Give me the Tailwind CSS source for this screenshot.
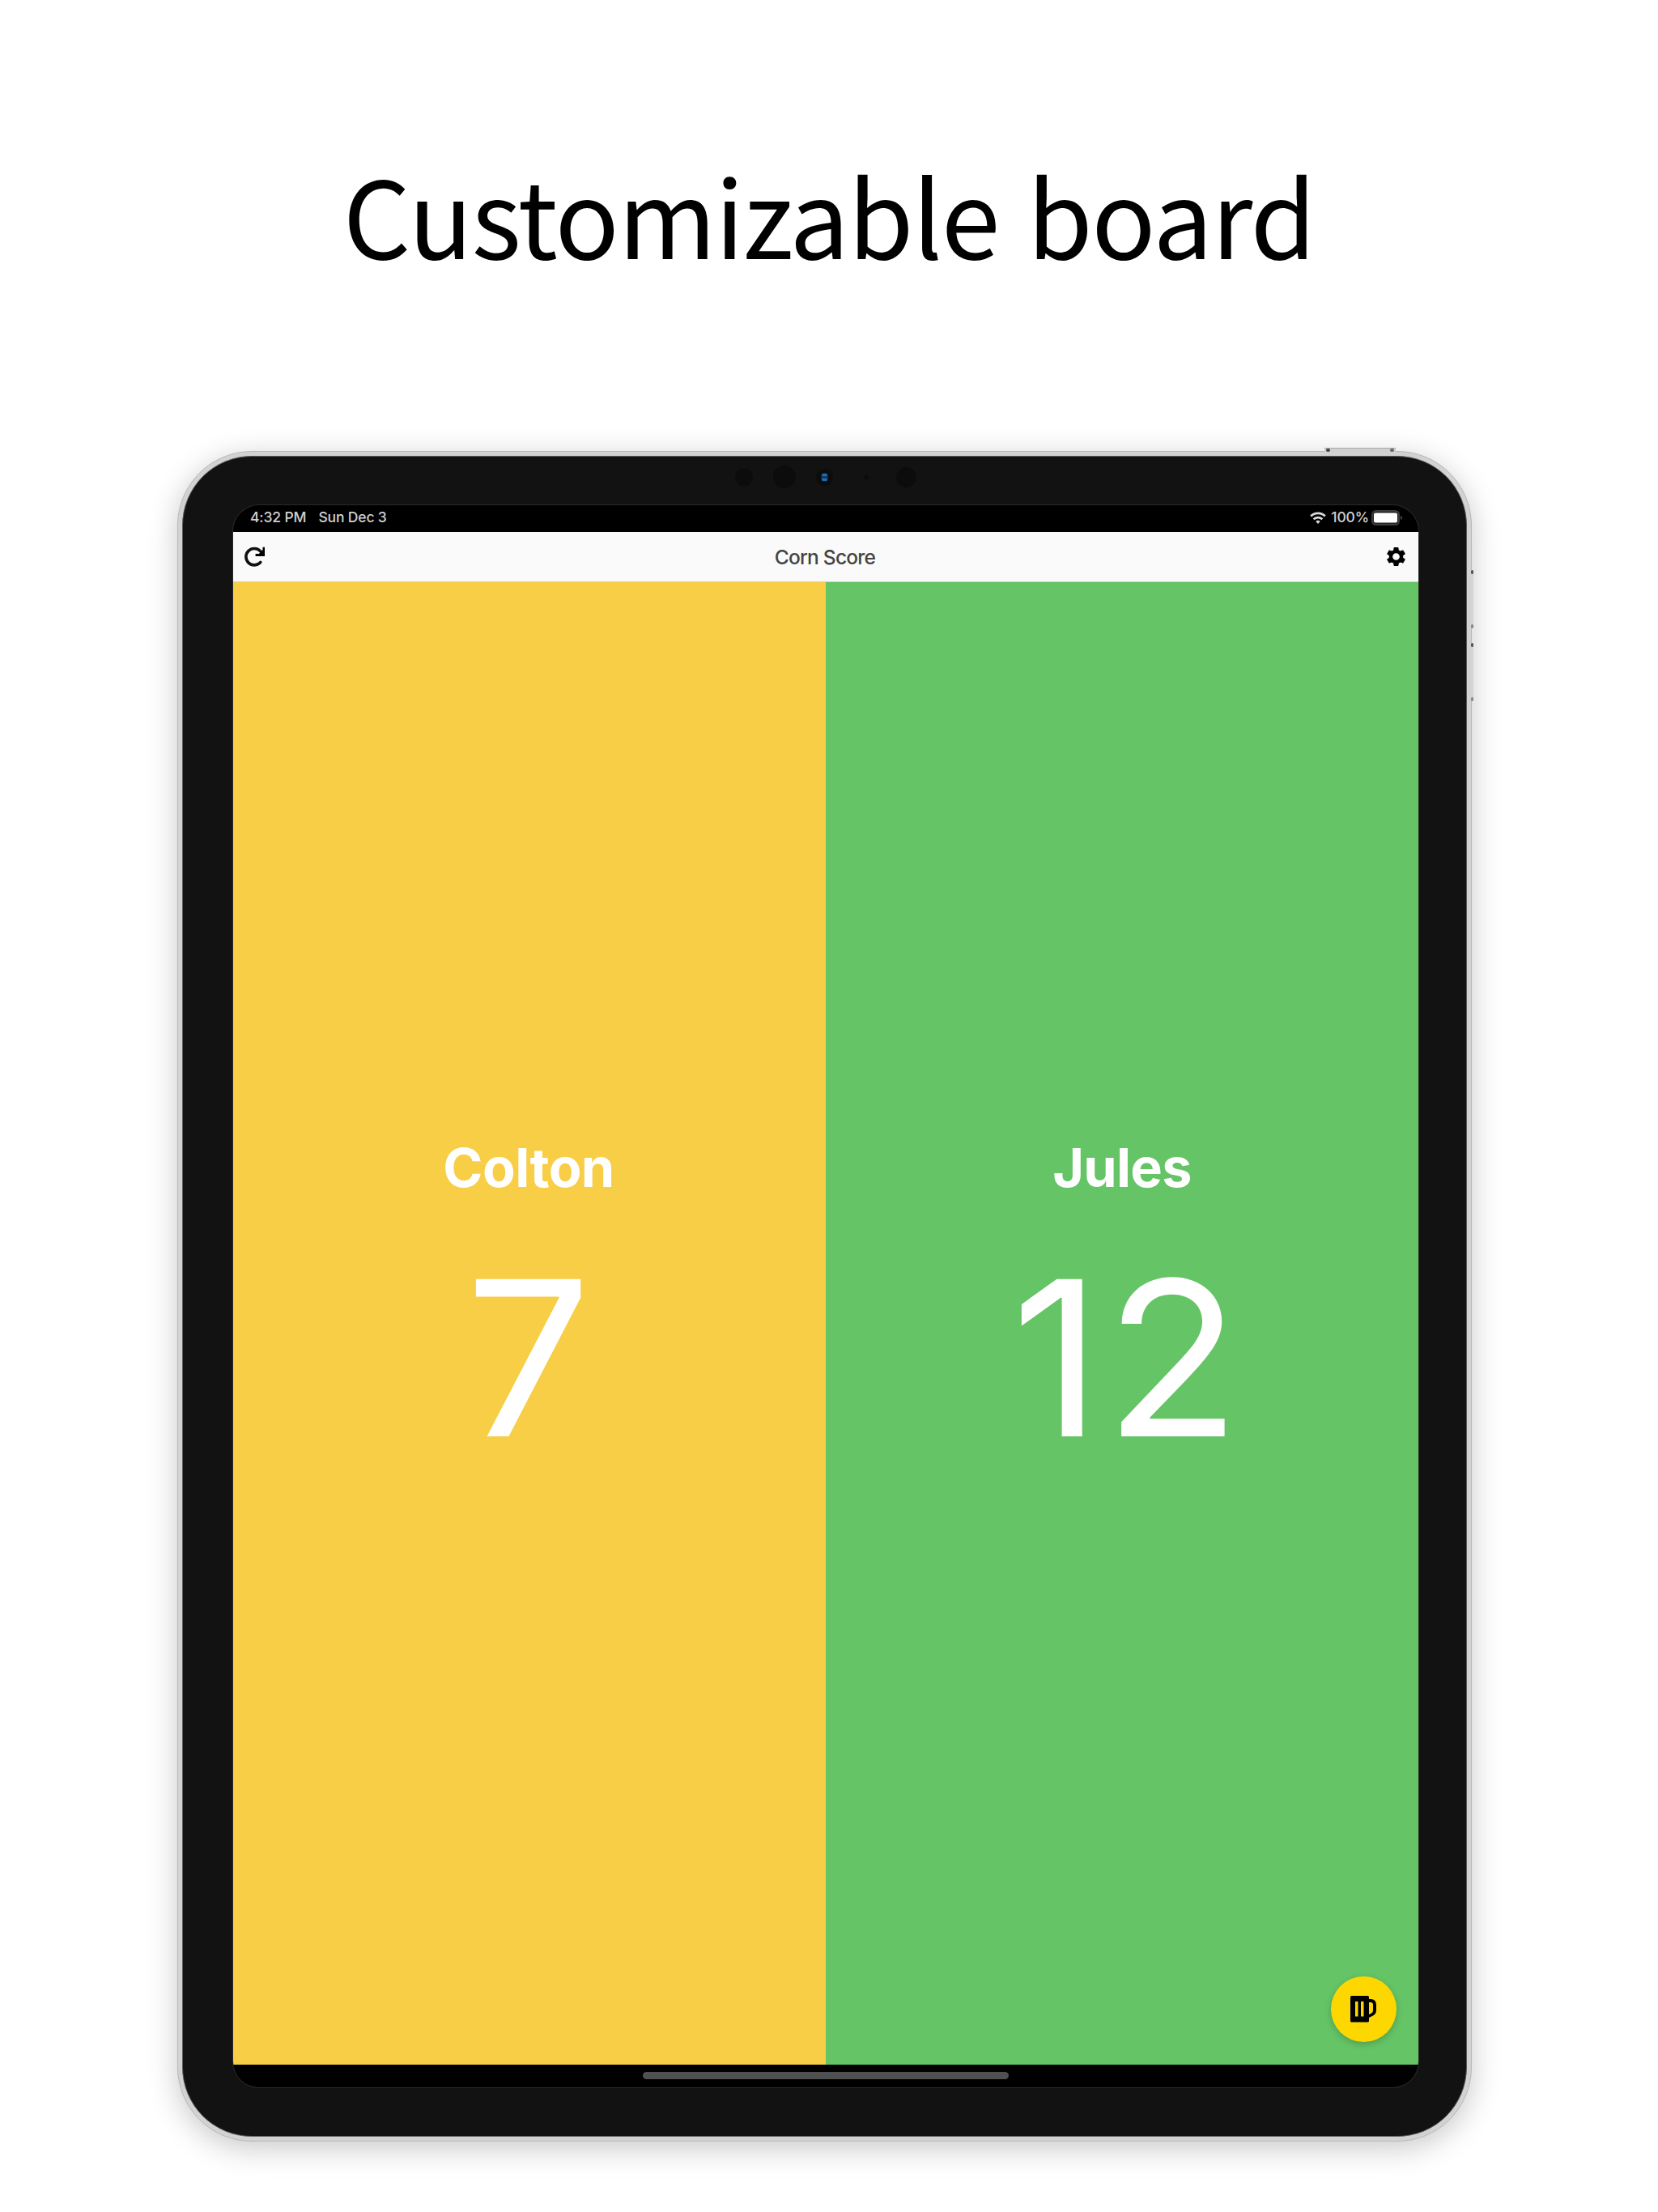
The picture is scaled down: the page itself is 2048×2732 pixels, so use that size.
<!DOCTYPE html>
<html lang="en">
<head>
<meta charset="utf-8">
<title>Corn Score</title>
<script src="https://cdn.jsdelivr.net/npm/@tailwindcss/browser@4"></script>
</head>
<body class="bg-white">
<main class="relative flex h-[2732px] w-[2048px] flex-col overflow-hidden bg-white font-['Inter',sans-serif]">
  <header class="flex h-[557px] shrink-0 justify-center pt-[163px]">
    <h1 class="h-[200px] whitespace-nowrap font-['Noto_Sans_CJK_SC',sans-serif] text-[131px] leading-[200px] font-normal tracking-[-1.450px] text-black [word-spacing:7px]">Customizable board</h1>
  </header>

  <!-- tablet body -->
  <section class="relative ml-[219px] flex h-[2088px] w-[1599px] flex-col rounded-[92px] border border-[#b9b9b9] bg-[#d2d2d2] p-[5px] shadow-[0_8px_36px_rgba(0,0,0,0.22)]">
    <!-- power and volume buttons -->
    <div class="absolute -top-[5px] left-[1416px] flex h-[5px] w-[88px] justify-between border-t border-[#aaa] bg-[#d0d0d0] px-[2px]"><i class="h-[4px] w-[5px] rounded-full bg-[#444]"></i><i class="h-[4px] w-[5px] rounded-full bg-[#666]"></i></div>
    <div class="absolute -right-[3px] top-[146px] flex h-[72px] w-[3px] flex-col justify-between bg-[#d4d4d4]"><i class="h-[5px] w-[3px] rounded-full bg-[#555]"></i><i class="h-[5px] w-[3px] rounded-full bg-[#888]"></i></div>
    <div class="absolute -right-[3px] top-[236px] flex h-[72px] w-[3px] flex-col justify-between bg-[#d4d4d4]"><i class="h-[5px] w-[3px] rounded-full bg-[#555]"></i><i class="h-[5px] w-[3px] rounded-full bg-[#888]"></i></div>

    <div class="relative flex grow flex-col rounded-[86px] border border-[#5a5a5a] bg-[#121212] pt-[60px] pr-[59px] pb-[60px] pl-[62px]">
      <!-- front camera and sensors -->
      <svg class="absolute left-[673px] top-[6px]" width="240" height="40" viewBox="899 570 240 40">
        <g fill="#0c0c0c"><circle cx="919" cy="589.5" r="11"/><circle cx="969" cy="589" r="14"/><circle cx="1018.500" cy="589.5" r="10.500"/><circle cx="1070" cy="589.5" r="3"/><circle cx="1119.500" cy="589.5" r="12.500"/></g>
        <rect x="1014.500" y="584.500" width="8" height="10" rx="3.500" fill="#123c6b"/>
        <path d="M1015.500 586.500h6M1015.500 592.500h6" stroke="#1f77c4" stroke-width="2.400"/>
      </svg>

      <!-- screen -->
      <div class="flex grow flex-col overflow-hidden rounded-[32px] bg-black ring-1 ring-[#2a2a2a]">
        <div class="flex h-[33px] shrink-0 items-center pr-[19px] pb-[3px] pl-[21px] text-[17.500px] font-medium tracking-[-0.15px] text-[#d0d0d0]">
          <span>4:32 PM</span><span class="ml-[15px]">Sun Dec 3</span>
          <svg class="ml-auto" width="20" height="15" viewBox="0 0 20 15" fill="none" stroke="#dadada" stroke-width="2.900"><path d="M1.200 5.500a12.500 12.500 0 0 1 17.600 0M4.600 9.300a7.800 7.800 0 0 1 10.800 0"/><path d="M10 15l-2.700-2.900a4 4 0 0 1 5.400 0z" fill="#dadada" stroke="none"/></svg>
          <span class="ml-[6px]">100%</span>
          <svg class="ml-[3px]" width="39" height="19" viewBox="0 0 39 19"><rect x="1" y="1" width="33" height="17" rx="4.500" fill="#222" stroke="#3c3c3c" stroke-width="2"/><rect x="3" y="3.500" width="29" height="12" rx="2" fill="#fff"/><path d="M36 7v5q2-.8 2-2.500t-2-2.500" fill="#4a4a4a"/></svg>
        </div>
        <div class="flex h-[62px] shrink-0 items-center justify-between border-b border-[#d5d5cd] bg-[#fafafa] pr-[13px] pl-[14px]">
          <svg width="26" height="26" viewBox="0 0 26 26"><path d="M19.800 19.300A10.200 10.200 0 1 1 19.700 5.900" fill="none" stroke="#111" stroke-width="3.600" stroke-linecap="round"/><path d="M13.600 11.900v-3h4.200L22.500 3.900V.700H25v11.200z" fill="#000"/></svg>
          <span class="pt-[2px] text-[24.500px] font-medium tracking-[-0.75px] text-[#444]">Corn Score</span>
          <svg width="29" height="29" viewBox="0 0 24 24"><path fill="#000" d="M19.140 12.940c.04-.3.06-.61.06-.94 0-.32-.02-.64-.07-.94l2.030-1.580a.49.490 0 0 0 .12-.61l-1.920-3.320a.49.490 0 0 0-.59-.22l-2.390.96c-.5-.38-1.030-.7-1.620-.94l-.36-2.540a.48.480 0 0 0-.48-.41h-3.840c-.24 0-.43.170-.47.410l-.36 2.540c-.59.240-1.130.570-1.620.940l-2.390-.96a.49.490 0 0 0-.59.220L2.740 8.870c-.12.210-.08.470.120.610l2.030 1.580c-.05.300-.09.630-.09.940s.02.640.070.940l-2.030 1.580a.49.490 0 0 0-.12.610l1.920 3.320c.12.220.370.290.590.220l2.390-.96c.5.380 1.030.700 1.620.940l.36 2.540c.05.240.24.410.48.410h3.840c.24 0 .44-.17.470-.41l.36-2.540c.59-.24 1.130-.56 1.620-.94l2.390.960c.22.080.47 0 .59-.22l1.920-3.320a.49.490 0 0 0-.12-.61zM12 15.600A3.600 3.600 0 1 1 12 8.400a3.600 3.600 0 0 1 0 7.200z"/></svg>
        </div>
        <div class="relative grid h-[1831px] shrink-0 grid-cols-2 text-center text-white">
          <div class="flex flex-col items-center bg-[#f8ce46] pt-[683px] pr-[2px]">
            <h2 class="text-[66.500px] leading-[80px] font-bold tracking-[-0.6px]">Colton</h2>
            <p class="mt-[35px] scale-x-[1.03] text-[267px] leading-[320px]">7</p>
          </div>
          <div class="flex flex-col items-center bg-[#65c466] pt-[683px]">
            <h2 class="text-[66.500px] leading-[80px] font-bold tracking-[-0.7px]">Jules</h2>
            <p class="mt-[35px] scale-x-[1.03] pl-[12px] text-[267px] leading-[320px] tracking-[3.500px]">12</p>
          </div>
          <button class="absolute right-[27px] bottom-[28px] flex size-[81px] items-center justify-center rounded-full bg-[#ffd700] pr-[2px] shadow-[0_3px_8px_rgba(0,0,0,0.2)]">
            <svg width="32" height="33" viewBox="0 0 32 33"><path fill="#000" fill-rule="evenodd" d="M1.500 0h20a1.500 1.500 0 0 1 1.500 1.500V4h3q6 1 6 7v6.500q0 5-4 7l-5 2.500v4a1.500 1.500 0 0 1-1.500 1.500h-20A1.500 1.500 0 0 1 0 31V1.500A1.500 1.500 0 0 1 1.500 0zM6 7v18.500h3.500V7zM13 7v18.500h3.500V7zM23 8v15l3-1.500q2-1 2-3.500v-7q0-3-3-3z"/></svg>
          </button>
        </div>
        <div class="flex grow justify-center pt-[9px]"><div class="h-[9px] w-[452px] rounded-full bg-[#505050]"></div></div>
      </div>
    </div>
  </section>
</main>
</body>
</html>
